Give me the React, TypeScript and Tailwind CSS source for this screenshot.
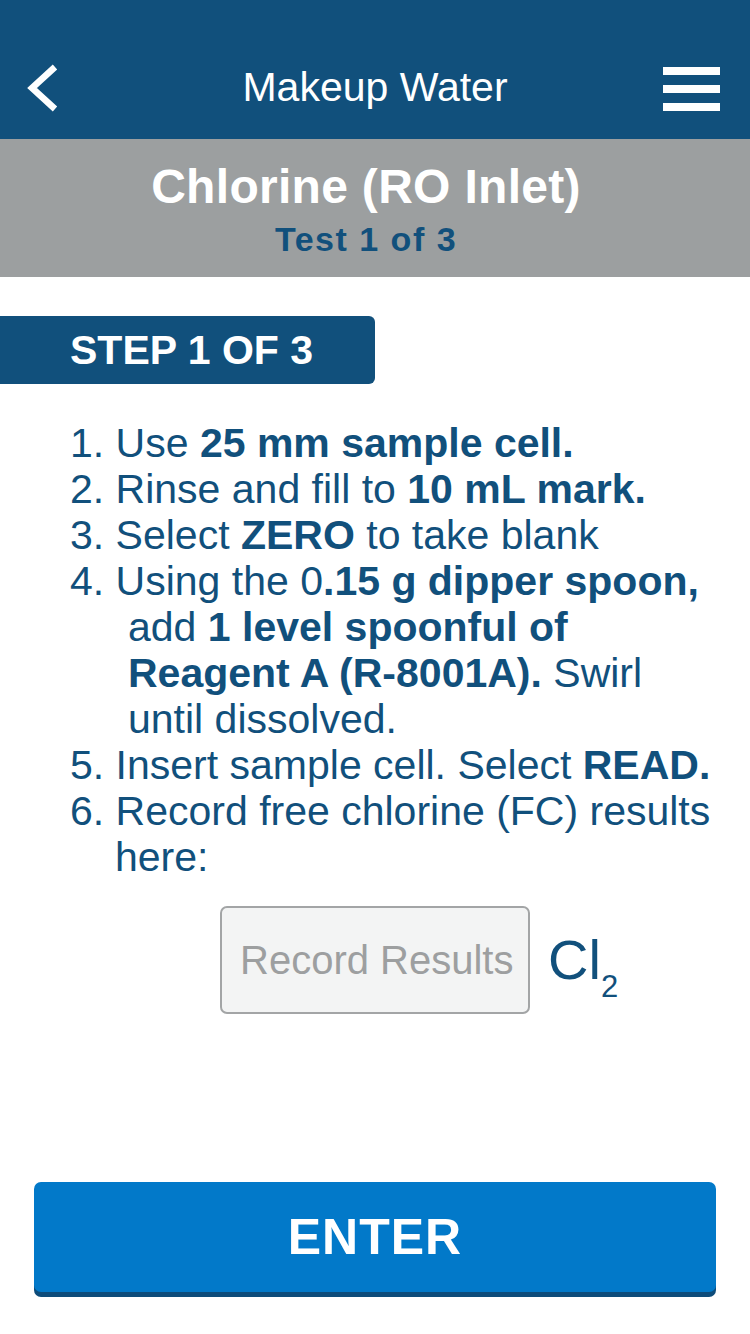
import React from 'react';

const font = { fontFamily: '"Liberation Sans", Arial, sans-serif' };

const BackIcon: React.FC = () => (
  <svg width="36" height="48" viewBox="0 0 36 48" className="block">
    <polyline points="30,3 7,24 30,45" fill="none" stroke="white" strokeWidth="6.5" strokeLinecap="butt" strokeLinejoin="miter" />
  </svg>
);

const MenuIcon: React.FC = () => (
  <div className="flex flex-col gap-[10px]">
    <span className="block w-[57px] h-[8px] bg-white" />
    <span className="block w-[57px] h-[8px] bg-white" />
    <span className="block w-[57px] h-[8px] bg-white" />
  </div>
);

const Step: React.FC<{ indent: string; children: React.ReactNode }> = ({ indent, children }) => (
  <div className={indent}>{children}</div>
);

export default function App() {
  return (
    <div className="w-[750px] h-[1334px] bg-white flex flex-col overflow-hidden" style={font}>
      {/* Top nav */}
      <header className="h-[139px] bg-[#11507c] pt-[38px]">
        <div className="h-[99px] grid grid-cols-[110px_1fr_110px] items-center">
          <div className="pl-[25px] flex items-center">
            <BackIcon />
          </div>
          <h1 className="text-center text-white text-[41px] leading-none">Makeup Water</h1>
          <div className="flex justify-end pr-[30px] pt-[2px]">
            <MenuIcon />
          </div>
        </div>
      </header>

      {/* Test band */}
      <div className="h-[138px] bg-[#9c9fa0] pt-[22px] pr-[18px] text-center">
        <div className="text-white font-bold text-[48px] leading-[52px] tracking-[0.3px]">Chlorine (RO Inlet)</div>
        <div className="mt-[6px] text-[#11507c] font-bold text-[34px] leading-[40px] tracking-[1.5px]">Test 1 of 3</div>
      </div>

      {/* Step label */}
      <div className="mt-[39px] w-[375px] h-[68px] bg-[#11507c] rounded-r-[6px] flex items-center pl-[70px]">
        <span className="text-white font-bold text-[41px] leading-none">STEP 1 OF 3</span>
      </div>

      {/* Instructions */}
      <div className="mt-[36px] pl-[70px] pr-[16px] text-[#11507c] text-[41px] leading-[46px]">
        <Step indent="">1. Use <b>25 mm sample cell.</b></Step>
        <Step indent="">2. Rinse and fill to <b>10 mL mark.</b></Step>
        <Step indent="">3. Select <b>ZERO</b> to take blank</Step>
        <Step indent="pl-[58px] -indent-[58px]">
          4. Using the 0<b>.15 g dipper spoon,</b>
          <br />
          add <b>1 level spoonful of</b>
          <br />
          <b>Reagent A (R-8001A).</b> Swirl
          <br />
          until dissolved.
        </Step>
        <Step indent="">5. Insert sample cell. Select <b>READ.</b></Step>
        <Step indent="pl-[45px] -indent-[45px]">
          6. Record free chlorine (FC) results
          <br />
          here:
        </Step>
      </div>

      {/* Result input */}
      <div className="mt-[26px] grid grid-cols-[1fr_auto_1fr] items-center">
        <div />
        <input
          type="text"
          placeholder="Record Results"
          className="w-[310px] h-[108px] border-2 border-[#a3a5a6] rounded-[7px] bg-[#f3f4f4] pl-[18px] pr-[8px] text-[40px] text-[#11507c] placeholder:text-[#9d9fa0] outline-none"
          style={font}
        />
        <div className="pl-[18px] text-[#11507c] text-[56px] leading-none">
          Cl<sub className="text-[31px] align-[-10px]">2</sub>
        </div>
      </div>

      {/* Enter */}
      <div className="mt-auto mb-[42px] mx-[34px]">
        <button
          className="w-full h-[110px] bg-[#0279c9] rounded-[7px] shadow-[0_5px_0_#0e4c7a] text-white font-bold text-[50px] leading-none tracking-[1px]"
          style={font}
        >
          ENTER
        </button>
      </div>
    </div>
  );
}
